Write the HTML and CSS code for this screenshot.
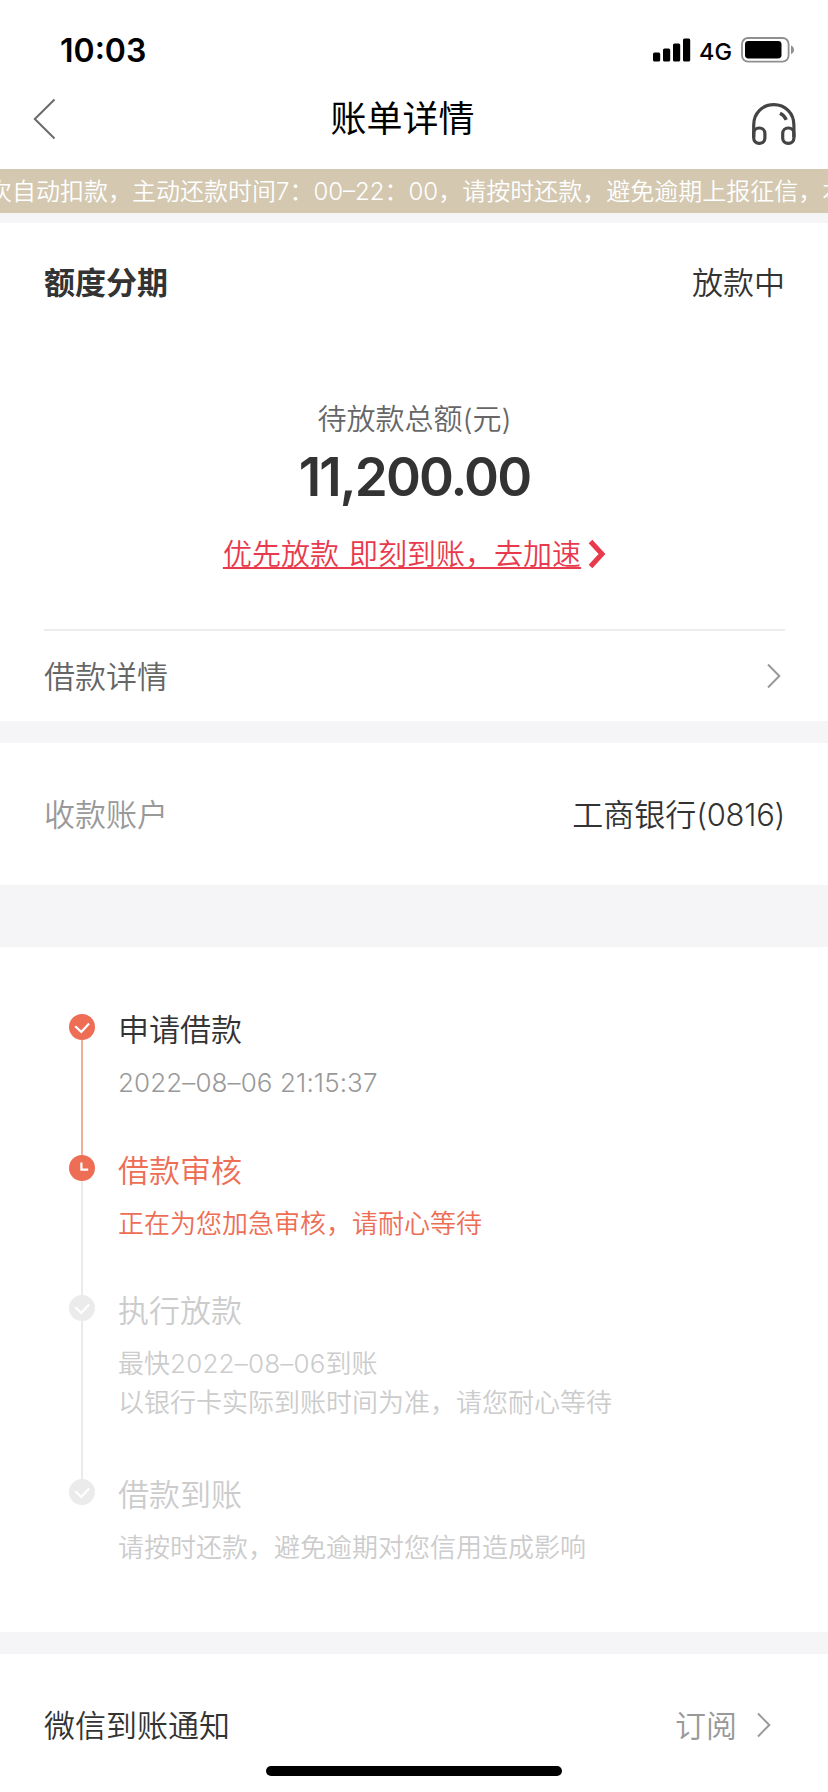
FILE: index.html
```html
<!DOCTYPE html>
<html lang="zh-CN">
<head>
<meta charset="utf-8">
<title>账单详情</title>
<link rel="stylesheet" href="styles.css">
</head>
<body>
<div class="screen">
  <header class="status">
    <span class="clock">10:03</span>
    <div class="status-icons">
      <svg class="signal" width="38" height="24" viewBox="0 0 38 24"><rect x="0" y="14.5" width="7.2" height="9" rx="1.6"/><rect x="10" y="10.5" width="7.2" height="13" rx="1.6"/><rect x="20" y="5.5" width="7.2" height="18" rx="1.6"/><rect x="30" y="0.5" width="7.2" height="23" rx="1.6"/></svg>
      <span class="network">4G</span>
      <svg class="battery" width="54" height="26" viewBox="0 0 54 26"><rect x="1" y="1" width="46.6" height="23.6" rx="6" fill="none" stroke="#8f8f8f" stroke-width="1.8"/><rect x="4" y="4" width="36.5" height="17.5" rx="3.4"/><path d="M50 8.5c4 1.4 4 7.2 0 8.6z" fill="#8f8f8f"/></svg>
    </div>
  </header>
  <nav class="nav">
    <svg class="back" width="24" height="44" viewBox="0 0 24 44"><path d="M21.5 2.5 1.8 22 21.5 41.5" fill="none" stroke="#6a6a6a" stroke-width="2"/></svg>
    <h1 class="title">账单详情</h1>
    <svg class="headset" width="46" height="44" viewBox="0 0 46 44" fill="none" stroke="#444" stroke-width="3.2"><path d="M2.7 35V23C2.7 11 11.5 2.7 22.8 2.7S42.9 11 42.9 23v12"/><rect x="2.7" y="26" width="11.2" height="15.4" rx="5.4"/><rect x="31.7" y="26" width="11.2" height="15.4" rx="5.4"/><path d="M29 11.2c3 1.4 5 3.6 6.2 6.6" stroke-width="3.4"/></svg>
  </nav>
  <div class="notice"><p class="notice-text">次自动扣款，主动还款时间7：00–22：00，请按时还款，避免逾期上报征信，本</p></div>

  <section class="card summary">
    <div class="row product"><strong>额度分期</strong><span>放款中</span></div>
    <div class="amount-block">
      <p class="amount-label">待放款总额(元)</p>
      <p class="amount">11,200.00</p>
      <a class="boost"><span class="boost-text">优先放款&nbsp;即刻到账，去加速</span><svg width="18" height="30" viewBox="0 0 18 30"><path d="M2.5 2.5 14 15 2.5 27.5" fill="none" stroke="#e83a4c" stroke-width="5"/></svg></a>
    </div>
    <div class="row detail"><span>借款详情</span><svg class="chevron" width="14" height="26" viewBox="0 0 14 26"><path d="M1 1.5 12.3 13 1 24.5"/></svg></div>
  </section>

  <section class="card row account"><span class="muted">收款账户</span><span>工商银行<span class="tail">(0816)</span></span></section>

  <section class="card timeline">
    <div class="step done">
      <div class="rail"><svg width="26" height="26" viewBox="0 0 26 26"><circle cx="13" cy="13" r="13"/><path d="m6.2 12.2 6.1 5.7 7.8-8.5"/></svg></div>
      <div class="step-body"><h2>申请借款</h2><p class="time">2022–08–06 21:15:37</p></div>
    </div>
    <div class="step active">
      <div class="rail"><svg width="26" height="26" viewBox="0 0 26 26"><circle cx="13" cy="13" r="13"/><path d="M12.4 7.5v7.2h6.8"/></svg></div>
      <div class="step-body"><h2>借款审核</h2><p>正在为您加急审核，请耐心等待</p></div>
    </div>
    <div class="step pending tall">
      <div class="rail"><svg width="26" height="26" viewBox="0 0 26 26"><circle cx="13" cy="13" r="13"/><path d="m6.2 12.2 6.1 5.7 7.8-8.5"/></svg></div>
      <div class="step-body"><h2>执行放款</h2><p>最快<span class="date">2022–08–06</span>到账<br>以银行卡实际到账时间为准，请您耐心等待</p></div>
    </div>
    <div class="step pending last">
      <div class="rail"><svg width="26" height="26" viewBox="0 0 26 26"><circle cx="13" cy="13" r="13"/><path d="m6.2 12.2 6.1 5.7 7.8-8.5"/></svg></div>
      <div class="step-body"><h2>借款到账</h2><p>请按时还款，避免逾期对您信用造成影响</p></div>
    </div>
  </section>

  <section class="card wechat">
    <div class="row subscribe"><span>微信到账通知</span><span class="action">订阅<svg class="chevron" width="14" height="26" viewBox="0 0 14 26"><path d="M1 1.5 12.3 13 1 24.5"/></svg></span></div>
    <div class="home-bar"></div>
  </section>
</div>
</body>
</html>
```
FILE: styles.css
```css
* { box-sizing: border-box; margin: 0; padding: 0; }
body {
  background: #f5f5f8;
  color: #333;
  font-family: Inter, "Noto Sans CJK SC", sans-serif;
  font-size: 31px;
  font-weight: 350;
}
.screen { width: 828px; height: 1792px; overflow: hidden; display: flex; flex-direction: column; }
svg { display: block; flex: none; }
.card { background: #fff; }
.row { display: flex; align-items: center; justify-content: space-between; }
.muted { color: #999; }

.status { height: 78px; padding: 22px 33px 0 60px; background: #fff; color: #000; display: flex; justify-content: space-between; align-items: center; }
.clock { font-size: 32px; font-weight: 600; line-height: 40px; padding-top: 1px; }
.status-icons { display: flex; align-items: center; }
.network { width: 42px; margin-left: 8px; font-size: 23.5px; font-weight: 500; line-height: 28px; padding-top: 3px; }

.nav { height: 91px; padding: 0 31px 10px 33px; background: #fff; color: #000; display: grid; grid-template-columns: 46px 1fr 46px; align-items: center; }
.title { font-size: 36px; font-weight: 400; line-height: 48px; text-align: center; margin-right: 25px; padding-top: 1px; }
.headset { margin-top: 10px; }

.notice { height: 44px; margin-bottom: 10px; background: #d4c8b1; color: #fff; overflow: hidden; }
.notice-text { margin-left: -12px; white-space: nowrap; font-size: 24px; line-height: 45px; }

.summary { height: 498px; padding: 0 43px 0 44px; margin-bottom: 22px; }
.product { height: 118px; padding-bottom: 4px; }
.product strong { font-weight: 600; }
.amount-block { height: 290px; padding-top: 58px; display: flex; flex-direction: column; align-items: center; border-bottom: 2px solid #ededed; }
.amount-label { font-size: 29px; line-height: 42px; color: #666; }
.amount { font-size: 53px; font-weight: 600; line-height: 76px; margin-top: -2px; letter-spacing: -1.9px; }
.boost { margin-top: 20px; display: flex; align-items: center; color: #e83a4c; font-size: 29px; line-height: 40px; gap: 7px; word-spacing: 2px; }
.boost-text { text-decoration: underline; text-decoration-thickness: 2px; text-underline-offset: 2px; }
.boost svg { margin-top: -2px; }
.detail { height: 90px; padding-right: 4px; color: #666; }
.detail span { padding-bottom: 3px; }
.chevron { fill: none; stroke: #999; stroke-width: 2; }

.account { height: 142px; padding: 0 43px 4px 44px; margin-bottom: 62px; }
.tail { letter-spacing: -0.3px; }

.timeline { height: 685px; padding: 67px 44px 0 69px; margin-bottom: 22px; }
.step { display: flex; gap: 23px; height: 141px; }
.step.active { height: 140px; }
.step.tall { height: 184px; }
.rail { width: 26px; display: flex; flex-direction: column; align-items: center; }
.rail::after { content: ""; flex: 1; width: 2px; background: #ebebeb; }
.done .rail::after { background: #f4ab98; }
.last .rail::after { display: none; }
.rail circle { fill: #ee6d55; }
.rail path { fill: none; stroke: #fff; stroke-width: 2.2; }
.pending .rail circle { fill: #ebebeb; }
.step-body h2 { font-size: 31px; font-weight: 350; line-height: 40px; margin-top: -4px; }
.step-body p { font-size: 26px; line-height: 39px; margin-top: 13px; color: #999; }
.time { letter-spacing: 0.1px; }
.date { letter-spacing: 0.2px; }
.active .step-body h2, .active .step-body p { color: #ee6d55; }
.pending .step-body h2, .pending .step-body p { color: #ccc; }

.wechat { flex: 1; display: flex; flex-direction: column; align-items: center; }
.subscribe { width: 100%; height: 112px; padding: 26px 57px 0 44px; }
.action { display: flex; align-items: center; gap: 20px; color: #999; }
.action svg { margin-top: 3px; }
.home-bar { width: 296px; height: 10px; border-radius: 5px; background: #000; }
```
